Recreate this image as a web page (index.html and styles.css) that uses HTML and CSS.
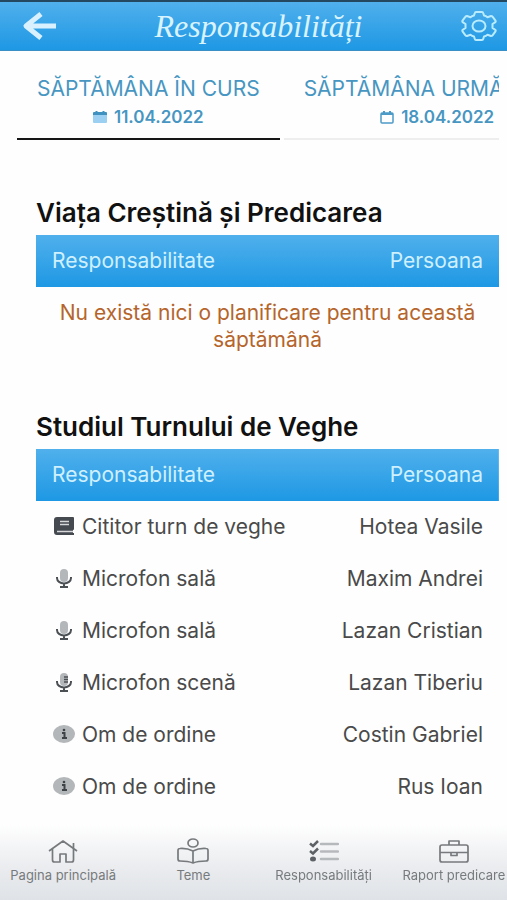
FILE: index.html
```html
<!DOCTYPE html>
<html lang="ro">
<head>
<meta charset="utf-8">
<meta name="viewport" content="width=device-width, initial-scale=1">
<title>Responsabilități</title>
<link rel="stylesheet" href="styles.css">
</head>
<body>
<svg class="sprite" aria-hidden="true">
  <symbol id="mic" viewBox="0 0 16 19">
    <rect x="4" y="0" width="8" height="13" rx="4" fill="#b4b7ba"/>
    <path d="M1 8v1a7 5.500 0 0 0 14 0v-1M8 14.500v3M4 18h8" fill="none" stroke="#4b5054" stroke-width="2"/>
  </symbol>
  <symbol id="info" viewBox="0 0 22 18">
    <ellipse cx="11" cy="9" rx="11" ry="9" fill="#b3b7ba"/>
    <path d="M9 8h2.500v5M9 13h5" fill="none" stroke="#3d4246" stroke-width="2"/>
    <circle cx="11" cy="5" r="1.300" fill="#3d4246"/>
  </symbol>
</svg>

<header class="topbar">
  <button class="icon-button" type="button" aria-label="Înapoi">
    <svg width="34" height="28" viewBox="0 0 34 28"><path d="M34 14H4M19 2L4 14l15 12" fill="none" stroke="#d9f1ff" stroke-width="5" stroke-linejoin="round"/></svg>
  </button>
  <h1 class="title">Responsabilități</h1>
  <button class="icon-button" type="button" aria-label="Setări">
    <svg width="36" height="30" viewBox="0 0 36 30" fill="none" stroke="#b9ecff" stroke-width="2" stroke-linejoin="round"><path d="M15 1h6q1 0 1.200 1l.8 2.500q2 .5 3.500 1.700L30 5q1 0 1.500.7l3 4q.5 1-.5 1.600L31.500 13v4l2.500 1.700q1 .6.500 1.600l-3 4q-.5.7-1.500.7l-3.500-1.200Q25 25 23 25.500L22.200 28q-.2 1-1.200 1h-6q-1 0-1.200-1l-.8-2.500q-2-.5-3.500-1.700L6 25q-1 0-1.500-.7l-3-4q-.5-1 .5-1.600L4.500 17v-4L2 11.300q-1-.6-.5-1.600l3-4Q5 5 6 5l3.500 1.200Q11 5 13 4.500L13.800 2q.2-1 1.200-1z"/><ellipse cx="18" cy="15" rx="6.500" ry="5.500"/></svg>
  </button>
</header>

<main>
  <div class="tabs" role="tablist">
    <button class="tab active" type="button" role="tab" aria-selected="true">
      <span class="tab-name">SĂPTĂMÂNA ÎN CURS</span>
      <span class="tab-date"><svg width="14" height="12" viewBox="0 0 14 12"><path d="M0 3h14v8q0 1-1 1H1q-1 0-1-1z" fill="#9bd0f2"/><path d="M0 4V2q0-1 1-1h12q1 0 1 1v2z" fill="#3f92c0"/><path d="M3.500 0v3M10.500 0v3" stroke="#3f92c0" stroke-width="2"/></svg>11.04.2022</span>
    </button>
    <button class="tab" type="button" role="tab" aria-selected="false">
      <span class="tab-name">SĂPTĂMÂNA URMĂTOARE</span>
      <span class="tab-date"><svg width="14" height="13" viewBox="0 0 14 13" fill="none" stroke="#4c9bc7"><rect x="1" y="2" width="12" height="10" rx="1" stroke-width="1.500"/><path d="M1 3h12M4 0v3M10 0v3" stroke-width="2"/></svg>18.04.2022</span>
    </button>
  </div>

  <section class="meeting">
    <h2>Viața Creștină și Predicarea</h2>
    <table>
      <thead><tr><th scope="col">Responsabilitate</th><th scope="col">Persoana</th></tr></thead>
      <tbody><tr><td class="empty" colspan="2">Nu există nici o planificare pentru această săptămână</td></tr></tbody>
    </table>
  </section>

  <section class="meeting">
    <h2>Studiul Turnului de Veghe</h2>
    <table>
      <thead><tr><th scope="col">Responsabilitate</th><th scope="col">Persoana</th></tr></thead>
      <tbody>
        <tr><td><span class="duty"><svg width="20" height="18" viewBox="0 0 20 18"><path d="M3 0h16q1 0 1 1v11q0 1-1 1v3h1v2H3q-3 0-3-3V3q0-3 3-3z" fill="#454a50"/><path d="M6 4.500h9M6 7.500h9" stroke="#d5d7d9" stroke-width="1.500"/><path d="M3 14.500h16" stroke="#d5d7d9" stroke-width="1.500"/></svg>Cititor turn de veghe</span></td><td>Hotea Vasile</td></tr>
        <tr><td><span class="duty"><svg width="16" height="19"><use href="#mic"/></svg>Microfon sală</span></td><td>Maxim Andrei</td></tr>
        <tr><td><span class="duty"><svg width="16" height="19"><use href="#mic"/></svg>Microfon sală</span></td><td>Lazan Cristian</td></tr>
        <tr><td><span class="duty"><svg width="16" height="19"><use href="#mic"/><path d="M8 4h4M8 6.500h4M8 9h4" stroke="#4b5054" stroke-width="1.300"/></svg>Microfon scenă</span></td><td>Lazan Tiberiu</td></tr>
        <tr><td><span class="duty"><svg width="22" height="18"><use href="#info"/></svg>Om de ordine</span></td><td>Costin Gabriel</td></tr>
        <tr><td><span class="duty"><svg width="22" height="18"><use href="#info"/></svg>Om de ordine</span></td><td>Rus Ioan</td></tr>
      </tbody>
    </table>
  </section>
</main>

<nav class="bottom-nav">
  <a href="#acasa"><svg width="30" height="24" viewBox="0 0 30 24" fill="none" stroke="#777a7d" stroke-width="1.700" stroke-linejoin="round"><path d="M1 12L15 2l14 10M4.500 10v11q0 2 2 2H12v-8h6v8h5.500q2 0 2-2V10M25.500 9V4"/></svg>Pagina principală</a>
  <a href="#teme"><svg width="32" height="26" viewBox="0 0 32 26" fill="none" stroke="#777a7d" stroke-width="1.700" stroke-linejoin="round"><ellipse cx="16" cy="5" rx="5" ry="4"/><path d="M16 13Q10 10 3 10.500q-2 0-2 2V21q0 2 2 2 8 0 13 2 5-2 13-2 2 0 2-2v-8.500q0-2-2-2Q22 10 16 13zM16 13v12"/></svg>Teme</a>
  <a href="#responsabilitati" aria-current="page"><svg width="30" height="22" viewBox="0 0 30 22" fill="none"><path d="M12 4h17M12 11.500h17M12 19h17" stroke="#b6b9bc" stroke-width="2.500" stroke-linecap="round"/><path d="M1 3.500l3 2.500 5-5M1 11l3 2.500 5-5" stroke="#5e6266" stroke-width="2.500"/><ellipse cx="4" cy="19" rx="3" ry="2.500" fill="#5e6266"/></svg>Responsabilități</a>
  <a href="#raport"><svg width="30" height="24" viewBox="0 0 30 24" fill="none" stroke="#777a7d" stroke-width="1.700" stroke-linejoin="round"><rect x="1" y="6" width="28" height="17" rx="2"/><path d="M10 6V2h10v4M1 13.500h28M12 13.500v3h6v-3"/></svg>Raport predicare</a>
</nav>
</body>
</html>
```
FILE: styles.css
```css
* { box-sizing: border-box; }

body {
  margin: 0;
  overflow-x: hidden;
  background: #fefefe;
  color: #4a4a4a;
  font: 21px/27px Inter, Roboto, sans-serif;
}

button {
  padding: 0;
  border: 0;
  background: none;
  font: inherit;
}

.sprite { position: absolute; width: 0; height: 0; }

.topbar {
  display: flex;
  align-items: center;
  justify-content: space-between;
  height: 51px;
  padding: 0 10px 0 22px;
  border-top: 2px solid #24485f;
  border-bottom: 1px solid #3a90c4;
  background: linear-gradient(#50b0ec, #1e98e4);
}

.icon-button { display: flex; }

.title {
  margin: 0;
  color: #d9f3ff;
  font: italic 32px/44px "Liberation Serif", serif;
}

.tabs {
  display: flex;
  gap: 4px;
  margin: 18px 8px 0 17px;
  overflow: hidden;
}

.tab {
  flex: none;
  padding: 6px 20px 9px;
  border-bottom: 2px solid #eeeeee;
  color: #4796c2;
}

.tab.active { border-color: #161616; }

.tab-name { display: block; }

.tab-date {
  display: flex;
  align-items: center;
  justify-content: center;
  gap: 7px;
  padding-top: 3px;
  font-size: 17px;
  font-weight: 600;
  line-height: 24px;
}

.meeting { margin: 59px 8px 0 36px; }
.meeting + .meeting { margin-top: 60px; }

h2 {
  margin: 0 0 8px;
  color: #111111;
  font-size: 26px;
  font-weight: 600;
  line-height: 28px;
}

table { width: 100%; border-collapse: collapse; }

thead { background: linear-gradient(#50b0ec, #1e98e4); }

th, td {
  height: 52px;
  padding: 0 16px 2px;
  font-weight: 400;
  text-align: left;
}

th { color: #cff0ff; }

th:last-child, td:last-child { text-align: right; }

tbody td.empty {
  padding: 12px 20px 0;
  color: #b5652b;
  text-align: center;
}

.duty {
  display: grid;
  grid-template-columns: 24px auto;
  gap: 6px;
  align-items: center;
  justify-content: start;
  justify-items: center;
}

.bottom-nav {
  position: fixed;
  right: 0;
  bottom: 0;
  left: 0;
  display: grid;
  grid-template-columns: repeat(4, calc(25% + 3px));
  margin-left: -2px;
  padding: 13px 0 16px;
  background: linear-gradient(#fefefe, #e9ebee 60%, #dfe3e7);
}

.bottom-nav a {
  display: grid;
  grid-template-rows: 26px 18px;
  gap: 2px;
  align-items: center;
  justify-items: center;
  color: #777a7d;
  font-size: 13px;
  line-height: 18px;
  text-decoration: none;
  white-space: nowrap;
}
```
